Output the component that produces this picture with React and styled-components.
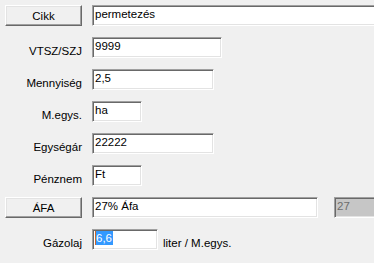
import React from 'react';
import styled, { createGlobalStyle } from 'styled-components';

const GlobalStyle = createGlobalStyle`
  html, body {
    margin: 0;
    padding: 0;
    background: #f0f0f0;
    overflow: hidden;
  }
  body {
    font-family: "Liberation Sans", Arial, sans-serif;
    font-size: 11.5px;
    color: #000;
  }
`;

const Page = styled.div`
  width: 374px;
  height: 263px;
  background: #f0f0f0;
  overflow: hidden;
`;

const Form = styled.div`
  display: grid;
  grid-template-columns: 77px 1fr;
  grid-auto-rows: 21px;
  column-gap: 10px;
  row-gap: 11px;
  padding: 5px 0 0 5px;
`;

const Label = styled.div`
  text-align: right;
  line-height: 14px;
  padding-top: 7px;
  white-space: nowrap;
`;

const Button = styled.div`
  box-sizing: border-box;
  height: 21px;
  display: flex;
  align-items: center;
  justify-content: center;
  padding-top: 1px;
  background: #f0f0f0;
  border-top: 1px solid #fff;
  border-left: 1px solid #fff;
  border-right: 1px solid #696969;
  border-bottom: 1px solid #696969;
  box-shadow: inset -1px -1px 0 #a0a0a0, inset 1px 1px 0 #e3e3e3;
`;

const FieldRow = styled.div`
  display: flex;
  align-items: flex-start;
  gap: ${(p) => p.$gap || 0}px;
  white-space: nowrap;
`;

const Field = styled.div`
  box-sizing: border-box;
  flex: none;
  width: ${(p) => p.$w}px;
  height: 21px;
  padding: 1px 2px 0 2px;
  line-height: 14px;
  overflow: hidden;
  white-space: nowrap;
  background: ${(p) => (p.$disabled ? '#c6c6c6' : '#fff')};
  color: ${(p) => (p.$disabled ? '#6d6d6d' : '#000')};
  border-top: 1px solid #a0a0a0;
  border-left: 1px solid #a0a0a0;
  border-right: 1px solid #fff;
  border-bottom: 1px solid #fff;
  box-shadow: inset 1px 1px 0 #696969, inset -1px -1px 0 #e3e3e3;
`;

const Selected = styled.span`
  display: inline-block;
  background: #3399ff;
  color: #fff;
  border-left: 1px solid #c8642a;
  padding-right: 1px;
`;

const Unit = styled.span`
  line-height: 14px;
  padding-top: 7px;
`;

export default function App() {
  return (
    <Page>
      <GlobalStyle />
      <Form>
        <Button>Cikk</Button>
        <FieldRow>
          <Field $w={300}>permetezés</Field>
        </FieldRow>

        <Label>VTSZ/SZJ</Label>
        <FieldRow>
          <Field $w={130}>9999</Field>
        </FieldRow>

        <Label>Mennyiség</Label>
        <FieldRow>
          <Field $w={122}>2,5</Field>
        </FieldRow>

        <Label>M.egys.</Label>
        <FieldRow>
          <Field $w={50}>ha</Field>
        </FieldRow>

        <Label>Egységár</Label>
        <FieldRow>
          <Field $w={122}>22222</Field>
        </FieldRow>

        <Label>Pénznem</Label>
        <FieldRow>
          <Field $w={50}>Ft</Field>
        </FieldRow>

        <Button>ÁFA</Button>
        <FieldRow $gap={16}>
          <Field $w={226}>27% Áfa</Field>
          <Field $w={60} $disabled>27</Field>
        </FieldRow>

        <Label>Gázolaj</Label>
        <FieldRow $gap={5}>
          <Field $w={66}>
            <Selected>6,6</Selected>
          </Field>
          <Unit>liter / M.egys.</Unit>
        </FieldRow>
      </Form>
    </Page>
  );
}
